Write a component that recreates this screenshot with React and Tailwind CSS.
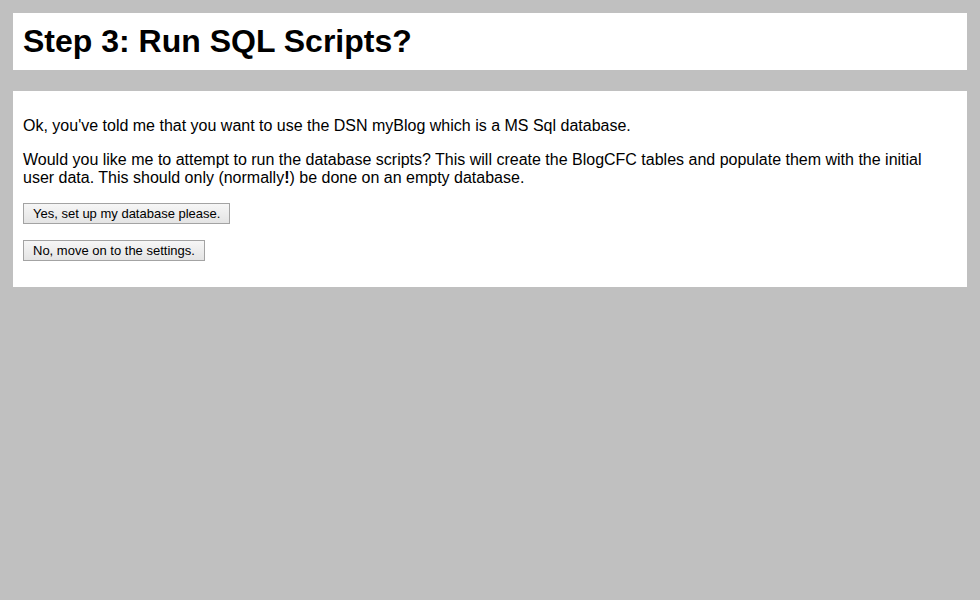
export default function App() {
  return (
    <div className="min-h-screen bg-[#c0c0c0] px-[13px] pt-[13px] pb-4 font-['Liberation_Sans',Arial,sans-serif] text-black">
      <div className="bg-white p-[10px]">
        <h1 className="text-[32px] leading-[37px] font-bold">Step 3: Run SQL Scripts?</h1>
      </div>

      <div className="mt-[21px] bg-white p-[10px] text-[16px] leading-[18px]">
        <p className="mt-4">
          Ok, you've told me that you want to use the DSN myBlog which is a MS Sql database.
        </p>
        <p className="mt-4">
          Would you like me to attempt to run the database scripts? This will create the BlogCFC tables and populate them with the initial user data. This should only (normally<span className="font-bold">!</span>) be done on an empty database.
        </p>
        <form className="mt-4">
          <button
            type="button"
            className="h-[21px] border border-[#a3a3a3] bg-gradient-to-b from-[#f6f6f6] to-[#e4e4e4] px-[9px] text-[13px] leading-[15px]"
          >
            Yes, set up my database please.
          </button>
        </form>
        <form className="mt-4 mb-4">
          <button
            type="button"
            className="h-[21px] border border-[#a3a3a3] bg-gradient-to-b from-[#f6f6f6] to-[#e4e4e4] px-[9px] text-[13px] leading-[15px]"
          >
            No, move on to the settings.
          </button>
        </form>
      </div>
    </div>
  );
}
